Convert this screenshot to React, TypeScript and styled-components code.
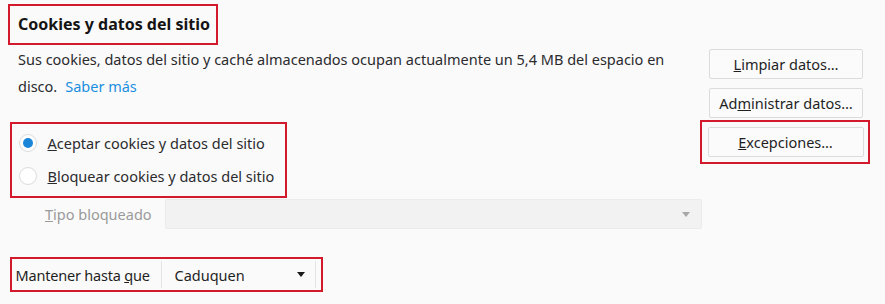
import React from "react";
import styled, { createGlobalStyle } from "styled-components";

const Global = createGlobalStyle`
  html, body { margin: 0; padding: 0; background: #fafafa; }
  * { box-sizing: border-box; }
`;

const RED = "#d3192c";

const Page = styled.div`
  width: 885px;
  height: 304px;
  overflow: hidden;
  background: #fafafa;
  padding: 4px 0 0 8px;
  font-family: "Noto Sans", "Open Sans", sans-serif;
  font-size: 14.5px;
  color: #2b2b2e;
`;

const Marked = styled.div`
  border: 2.5px solid ${RED};
`;

const TitleBox = styled(Marked)`
  width: 210px;
  height: 41px;
  display: flex;
  align-items: center;
  padding: 0 0 2px 8px;
`;

const Title = styled.h2`
  margin: 0;
  font-size: 16px;
  font-weight: 700;
  color: #141414;
`;

const Top = styled.div`
  display: flex;
`;

const LeftCol = styled.div`
  width: 692px;
  display: flex;
  flex-direction: column;
  align-items: flex-start;
`;

const Description = styled.p`
  margin: 1px 0 0 10px;
  line-height: 27px;
  white-space: nowrap;
`;

const Link = styled.a`
  color: #1a8fde;
  text-decoration: none;
  margin-left: 8px;
`;

const RadioBox = styled(Marked)`
  margin: 21.5px 0 0 2px;
  width: 277px;
  height: 76px;
  padding: 3px 0 0 6.5px;
`;

const RadioRow = styled.label`
  display: flex;
  align-items: center;
  height: 33px;
  gap: 11px;
`;

const RadioCircle = styled.span<{ $checked?: boolean }>`
  width: 18px;
  height: 18px;
  border-radius: 50%;
  border: 1px solid #dcdcdc;
  background: #ffffff;
  display: flex;
  align-items: center;
  justify-content: center;
  &::after {
    content: "";
    width: 10px;
    height: 10px;
    border-radius: 50%;
    background: ${(p) => (p.$checked ? "#1b86d8" : "transparent")};
  }
`;

const RightCol = styled.div`
  display: flex;
  flex-direction: column;
  align-items: flex-start;
  padding-top: 4px;
`;

const Button = styled.button<{ $gap?: number; $indent?: number; $w?: number }>`
  width: ${(p) => p.$w ?? 154}px;
  height: 30px;
  margin: ${(p) => p.$gap ?? 0}px 0 0 ${(p) => p.$indent ?? 0}px;
  border: 1px solid #dcdcdc;
  border-radius: 2px;
  background: #fbfbfb;
  font-family: inherit;
  font-size: 14.5px;
  color: #1f1f1f;
  padding: 0;
`;

const ButtonMark = styled(Marked)`
  margin-top: 2px;
  width: 170px;
  padding: 4.5px 3.5px 5px 5.5px;
`;

const TypeRow = styled.div`
  display: flex;
  align-items: center;
  margin-top: 1.5px;
  height: 30px;
`;

const TypeLabel = styled.span`
  width: 157px;
  padding-left: 37px;
  color: #9a9a9a;
`;

const DisabledSelect = styled.div`
  width: 537px;
  height: 30px;
  background: #f2f2f2;
  border: 1px solid #ebebeb;
  border-radius: 2px;
  display: flex;
  align-items: center;
  justify-content: flex-end;
  padding-right: 11px;
`;

const Arrow = styled.span<{ $color: string }>`
  width: 0;
  height: 0;
  border-left: 4px solid transparent;
  border-right: 4px solid transparent;
  border-top: 5px solid ${(p) => p.$color};
`;

const KeepBox = styled(Marked)`
  margin: 28px 0 0 2px;
  width: 313px;
  height: 35px;
  display: flex;
  align-items: stretch;
  padding: 2px 5px 2px 3.5px;
`;

const KeepLabel = styled.span`
  display: flex;
  align-items: center;
  width: 145px;
  color: #1f1f1f;
  letter-spacing: -0.2px;
`;

const KeepSelect = styled.div`
  flex: 1;
  display: flex;
  align-items: center;
  justify-content: space-between;
  border-left: 1px solid #e3e3e3;
  border-right: 1px solid #e3e3e3;
  padding: 0 10px 0 13px;
  color: #1f1f1f;
`;

export default function App() {
  return (
    <Page>
      <Global />
      <TitleBox>
        <Title>Cookies y datos del sitio</Title>
      </TitleBox>
      <Top>
        <LeftCol>
          <Description>
            Sus cookies, datos del sitio y caché almacenados ocupan actualmente un 5,4 MB del espacio en
            <br />
            disco.
            <Link href="#">Saber más</Link>
          </Description>
          <RadioBox>
            <RadioRow>
              <RadioCircle $checked />
              <span>
                <u>A</u>ceptar cookies y datos del sitio
              </span>
            </RadioRow>
            <RadioRow>
              <RadioCircle />
              <span>
                <u>B</u>loquear cookies y datos del sitio
              </span>
            </RadioRow>
          </RadioBox>
        </LeftCol>
        <RightCol>
          <Button $indent={9}>
            <u>L</u>impiar datos…
          </Button>
          <Button $indent={9} $gap={9}>
            Ad<u>m</u>inistrar datos…
          </Button>
          <ButtonMark>
            <Button $w={156}>
              <u>E</u>xcepciones…
            </Button>
          </ButtonMark>
        </RightCol>
      </Top>
      <TypeRow>
        <TypeLabel>
          <u>T</u>ipo bloqueado
        </TypeLabel>
        <DisabledSelect>
          <Arrow $color="#a8a8a8" />
        </DisabledSelect>
      </TypeRow>
      <KeepBox>
        <KeepLabel>
          <span>
            Mantener hasta <u>q</u>ue
          </span>
        </KeepLabel>
        <KeepSelect>
          <span>Caduquen</span>
          <Arrow $color="#1a1a1a" />
        </KeepSelect>
      </KeepBox>
    </Page>
  );
}
